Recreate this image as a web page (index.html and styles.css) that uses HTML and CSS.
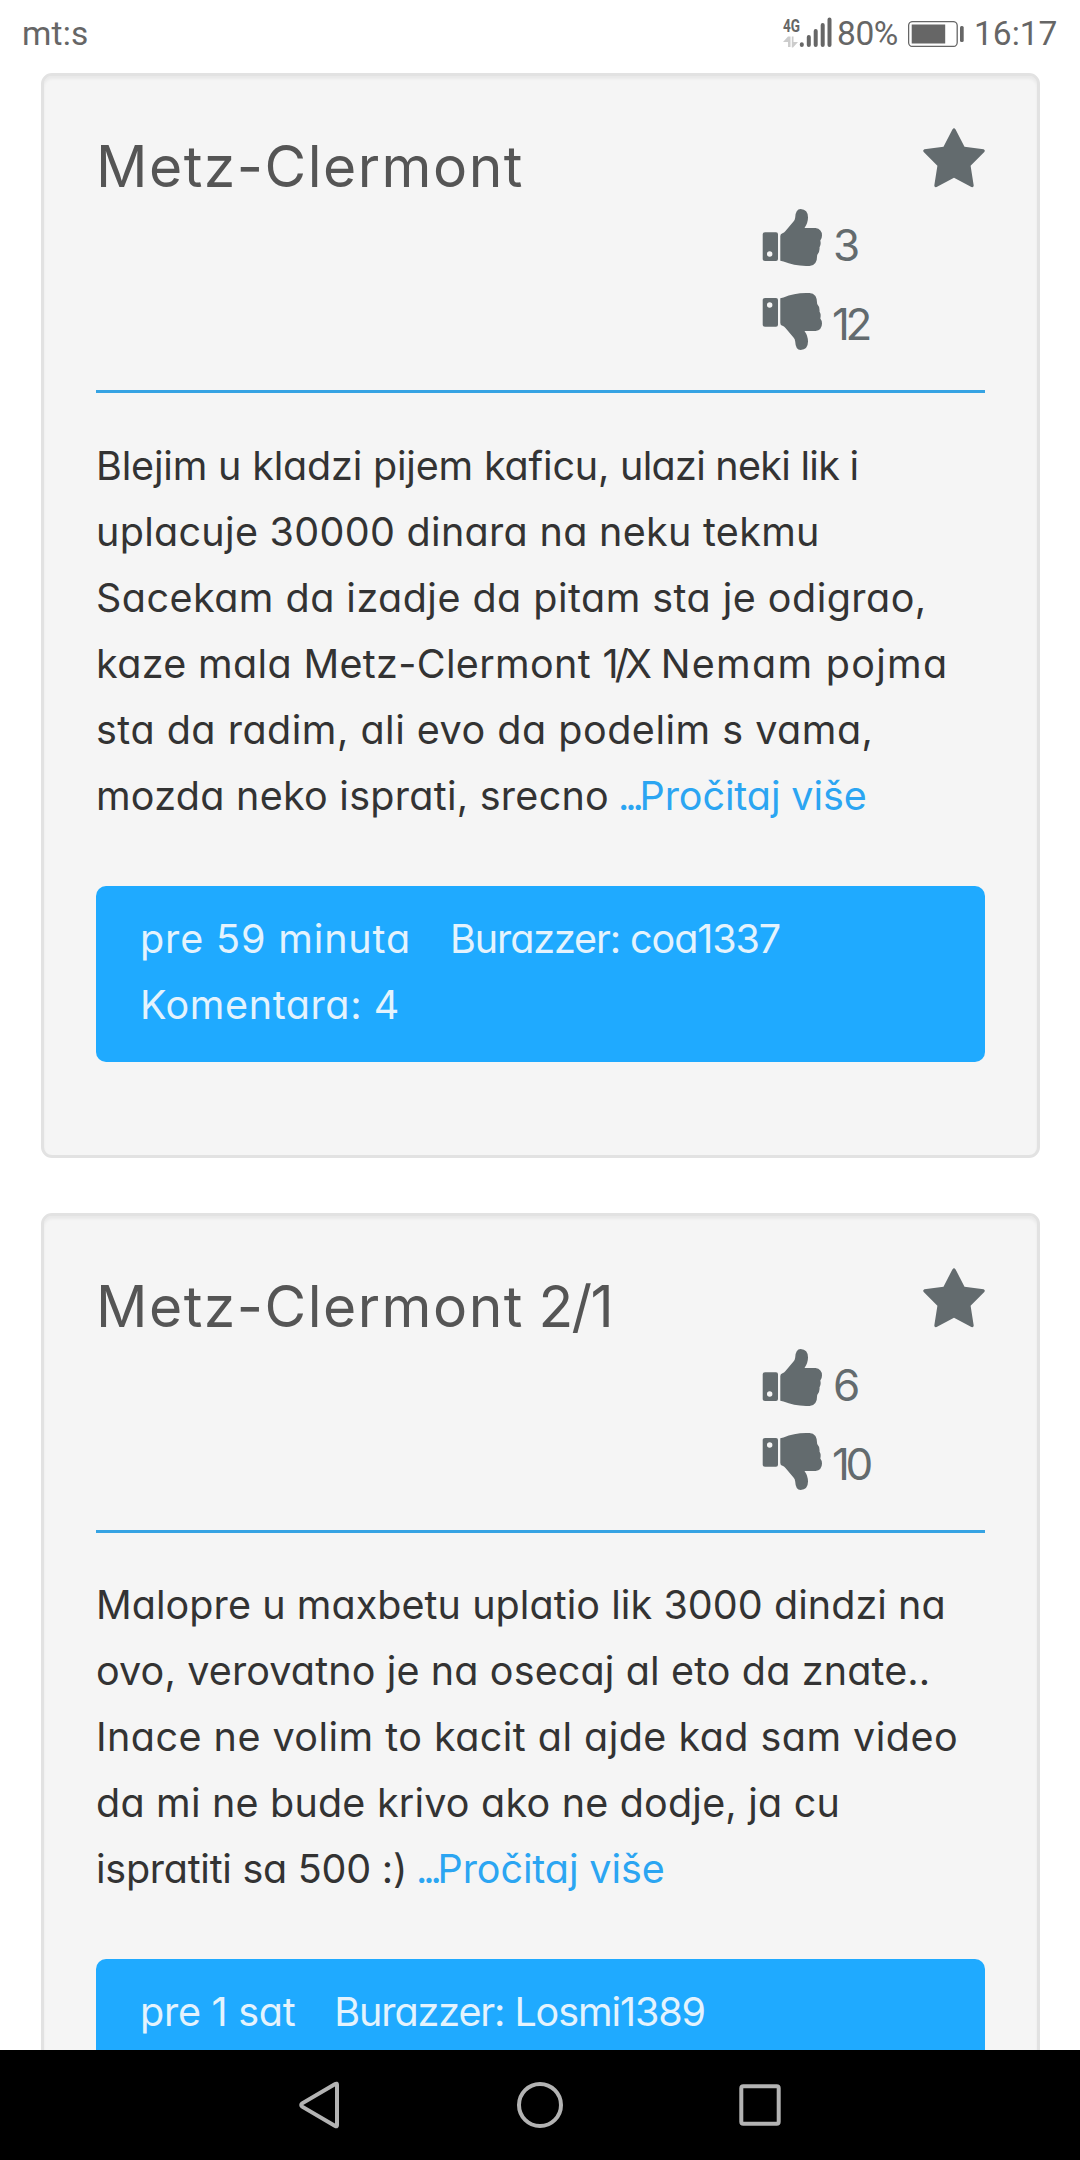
FILE: index.html
```html
<!DOCTYPE html>
<html lang="sr">
<head>
<meta charset="utf-8">
<title>Burazzeri</title>
<link rel="stylesheet" href="styles.css">
</head>
<body>
<svg class="symbols" aria-hidden="true">
  <symbol id="star" viewBox="0 0 62 60">
    <path d="M29.4 1.4Q31-.9 32.6 1.4L41.5 18.7 60.6 21.3Q62.6 22.2 61.3 24L47.6 37.7 50.7 57.4Q50.6 59.7 48.4 59L31 49.8 13.6 59Q11.4 59.7 11.3 57.4L14.4 37.7.7 24Q-.6 22.2 1.4 21.3L20.5 18.7Z"/>
  </symbol>
  <symbol id="thumb" viewBox="0 0 60 57">
    <path fill-rule="evenodd" d="M3 23.3H14Q16 23.3 16 25.3V50Q16 52 14 52H3Q.7 52 .7 50V25.3Q.7 23.3 3 23.3ZM7.7 42.3A2.7 2.7 0 1 0 7.7 47.7A2.7 2.7 0 1 0 7.7 42.3Z"/>
    <path d="M18.3 27Q18.3 24.6 20.5 24.2Q22 23.8 23.5 22L31.5 12.5Q33 10.8 33.2 8.5Q33.6 0 38.6 0Q46 .3 46 8.5Q46 14 42.5 19H53.5Q60 20 60 26.5Q60 29.5 58.3 31.5Q59.3 35.5 57.5 38.5Q58 43 55.2 46Q55.2 56.8 47.5 57Q33 57.3 21.5 52.6L18.3 51.8Z"/>
  </symbol>
</svg>

<header class="status">
  <span class="carrier">mt:s</span>
  <div class="status-right">
    <svg class="signal" viewBox="0 0 49 34">
      <text class="signal-label" x="0" y="14.5" textLength="17" lengthAdjust="spacingAndGlyphs">4G</text>
      <path class="data-arrows" d="M0 25L5 19.5H7.5V30H5V25ZM15 25L10 30.5H8.8V19.5H10.5V25Z"/>
      <path class="signal-bars" d="M18.8 27.3V28M25.8 20V28M32.7 14V28M39.7 8V28M46.5 2.6V28"/>
    </svg>
    <span class="battery-level">80%</span>
    <svg class="battery" viewBox="0 0 56 26">
      <rect class="battery-case" x=".6" y=".6" width="48.6" height="24.8" rx="4"/>
      <rect x="3.7" y="3.5" width="33.5" height="19"/>
      <rect x="52" y="5" width="3.7" height="16" rx="1.5"/>
    </svg>
    <span class="clock">16:17</span>
  </div>
</header>

<main class="feed">
  <article class="card">
    <div class="card-head">
      <h2 class="title">Metz-Clermont</h2>
      <svg class="star"><use href="#star"/></svg>
      <div class="votes">
        <div class="vote up"><svg class="thumb"><use href="#thumb"/></svg><span>3</span></div>
        <div class="vote down"><svg class="thumb"><use href="#thumb"/></svg><span class="two">12</span></div>
      </div>
    </div>
    <p class="text">
      <span class="line"><span class="t-n18">Blejim u kladzi pijem kaficu, </span><span class="t-n72">ulazi neki lik i</span></span>
      <span class="line t-30">uplacuje 30000 dinara na neku tekmu</span>
      <span class="line t-46">Sacekam da izadje da pitam sta je odigrao,</span>
      <span class="line t-34">kaze mala Metz-Clermont <span class="score">1/X</span><span class="t-150"> Nemam pojma</span></span>
      <span class="line t-50">sta da radim, ali evo da podelim s vama,</span>
      <span class="line"><span class="t-27">mozda neko isprati, srecno</span><a class="more"><span class="dots">...</span>Pročitaj više</a></span>
    </p>
    <footer class="meta">
      <span class="when t-87">pre 59 minuta</span>
      <span class="who">Burazzer: coa1337</span>
      <span class="t-60">Komentara: 4</span>
    </footer>
  </article>

  <article class="card">
    <div class="card-head">
      <h2 class="title">Metz-Clermont<span class="result"> 2/1</span></h2>
      <svg class="star"><use href="#star"/></svg>
      <div class="votes">
        <div class="vote up"><svg class="thumb"><use href="#thumb"/></svg><span>6</span></div>
        <div class="vote down"><svg class="thumb"><use href="#thumb"/></svg><span class="two">10</span></div>
      </div>
    </div>
    <p class="text">
      <span class="line t-6">Malopre u maxbetu uplatio lik 3000 dindzi na</span>
      <span class="line t-13">ovo, verovatno je na osecaj al eto da znate..</span>
      <span class="line t-46">Inace ne volim to kacit al ajde kad sam video</span>
      <span class="line t-20">da mi ne bude krivo ako ne dodje, ja cu</span>
      <span class="line"><span class="t-n26">ispratiti sa 500 :)</span><a class="more"><span class="dots">...</span>Pročitaj više</a></span>
    </p>
    <footer class="meta">
      <span class="when t-n26">pre 1 sat</span>
      <span class="who">Burazzer: Losmi1389</span>
    </footer>
  </article>
</main>

<nav class="navbar">
  <svg class="nav-icon" viewBox="0 0 48 48"><path d="M41 3.8V44.2Q41 46 39.2 45L6.2 25.6Q4.2 24 6.2 22.4L39.2 3Q41 2 41 3.8Z"/></svg>
  <svg class="nav-icon" viewBox="0 0 48 48"><circle cx="24" cy="24" r="21"/></svg>
  <svg class="nav-icon" viewBox="0 0 48 48"><rect x="5.3" y="5.3" width="37.4" height="37.4" rx="2"/></svg>
</nav>
</body>
</html>
```
FILE: styles.css
```css
* { box-sizing: border-box; }

body {
  margin: 0;
  width: 1080px;
  height: 2160px;
  overflow: hidden;
  display: flex;
  flex-direction: column;
  background: #fff;
  color: #333;
  font-family: Inter, "Noto Sans", sans-serif;
  font-feature-settings: "cv11";
}

.symbols { display: none; }

/* Status bar */
.status {
  flex: none;
  height: 73px;
  padding: 14px 22px 0 22px;
  display: flex;
  justify-content: space-between;
  color: #666;
  font: 33.5px/40px Roboto, sans-serif;
}
.status-right { display: flex; }
.carrier { letter-spacing: .2px; }
.signal {
  width: 49px;
  height: 34px;
  margin: 3px 5px 0 0;
  overflow: visible;
}
.signal-label { font: bold 18px Roboto, sans-serif; fill: #666; }
.data-arrows { fill: #ccc; }
.signal-bars { fill: none; stroke: #666; stroke-width: 4; stroke-linecap: round; }
.battery-level { width: 71px; letter-spacing: -.4px; }
.battery { width: 56px; height: 26px; margin-top: 6.5px; fill: #666; }
.battery-case { fill: none; stroke: #666; stroke-width: 1.3; }
.clock { width: 84px; margin-left: 10px; white-space: nowrap; }

/* Feed */
.feed {
  flex: 1;
  min-height: 0;
  overflow: hidden;
  padding: 0 40px 0 41px;
}
.card {
  height: 1085px;
  margin: 0 0 55px;
  padding: 52px 52px 0;
  border: 3px solid #e2e2e2;
  border-radius: 11px;
  background: #f5f5f5;
  box-shadow: inset 0 3px 3px rgba(0, 0, 0, .05);
}
.card-head {
  height: 265px;
  display: grid;
  grid-template-columns: 1fr auto;
  grid-template-rows: 81px 1fr;
  border-bottom: 3px solid #36a3e3;
}
.title {
  margin: 9px 0 0;
  color: #555;
  font-size: 57px;
  font-weight: 400;
  line-height: 60px;
  letter-spacing: 1.5px;
  white-space: nowrap;
}
.result { letter-spacing: -1.6px; }
.star { width: 62px; height: 60px; fill: #636b6e; }
.votes {
  grid-column: 1 / -1;
  width: 223px;
  margin-left: auto;
  color: #636b6e;
  font-size: 44px;
  line-height: 60px;
}
.vote { display: flex; gap: 12px; height: 84px; }
.vote span { margin: 6px 0 0 -1px; }
.vote.down span { margin-top: 1px; }
.vote .two { margin-left: -2px; letter-spacing: -4.5px; }
.thumb { width: 60px; height: 57px; fill: currentColor; }
.down .thumb { transform: scaleY(-1); }

.text {
  margin: 40px 0 57px;
  font-size: 39.5px;
  line-height: 66px;
  white-space: nowrap;
}
.card:last-child .text { margin-top: 39px; }
.line { display: block; }
.score { letter-spacing: -3.8px; }
.more { margin-left: 9px; color: #2ba5f2; letter-spacing: -.1px; }
.dots { letter-spacing: -4.2px; }

.meta {
  display: flex;
  flex-wrap: wrap;
  column-gap: 39px;
  height: 176px;
  padding: 20px 44px 24px;
  border-radius: 10px;
  background: #1faaff;
  color: #e4f3fd;
  font-size: 39.5px;
  line-height: 66px;
  white-space: nowrap;
}
.who { width: 440px; letter-spacing: -1.1px; }

/* Tracking steps for individual lines */
.t-n72 { letter-spacing: -.72px; }
.t-n26 { letter-spacing: -.26px; }
.t-n18 { letter-spacing: -.18px; }
.t-6 { letter-spacing: .06px; }
.t-13 { letter-spacing: .13px; }
.t-20 { letter-spacing: .2px; }
.t-27 { letter-spacing: .27px; }
.t-30 { letter-spacing: .3px; }
.t-34 { letter-spacing: .34px; }
.t-46 { letter-spacing: .46px; }
.t-50 { letter-spacing: .5px; }
.t-60 { letter-spacing: .6px; }
.t-87 { letter-spacing: .87px; }
.t-150 { letter-spacing: 1.3px; }

/* System navigation */
.navbar {
  flex: none;
  height: 110px;
  display: flex;
  align-items: center;
  justify-content: center;
  gap: 172px;
  background: #000;
}
.nav-icon { width: 48px; height: 48px; fill: none; stroke: #b3b3b3; stroke-width: 4; }
```
